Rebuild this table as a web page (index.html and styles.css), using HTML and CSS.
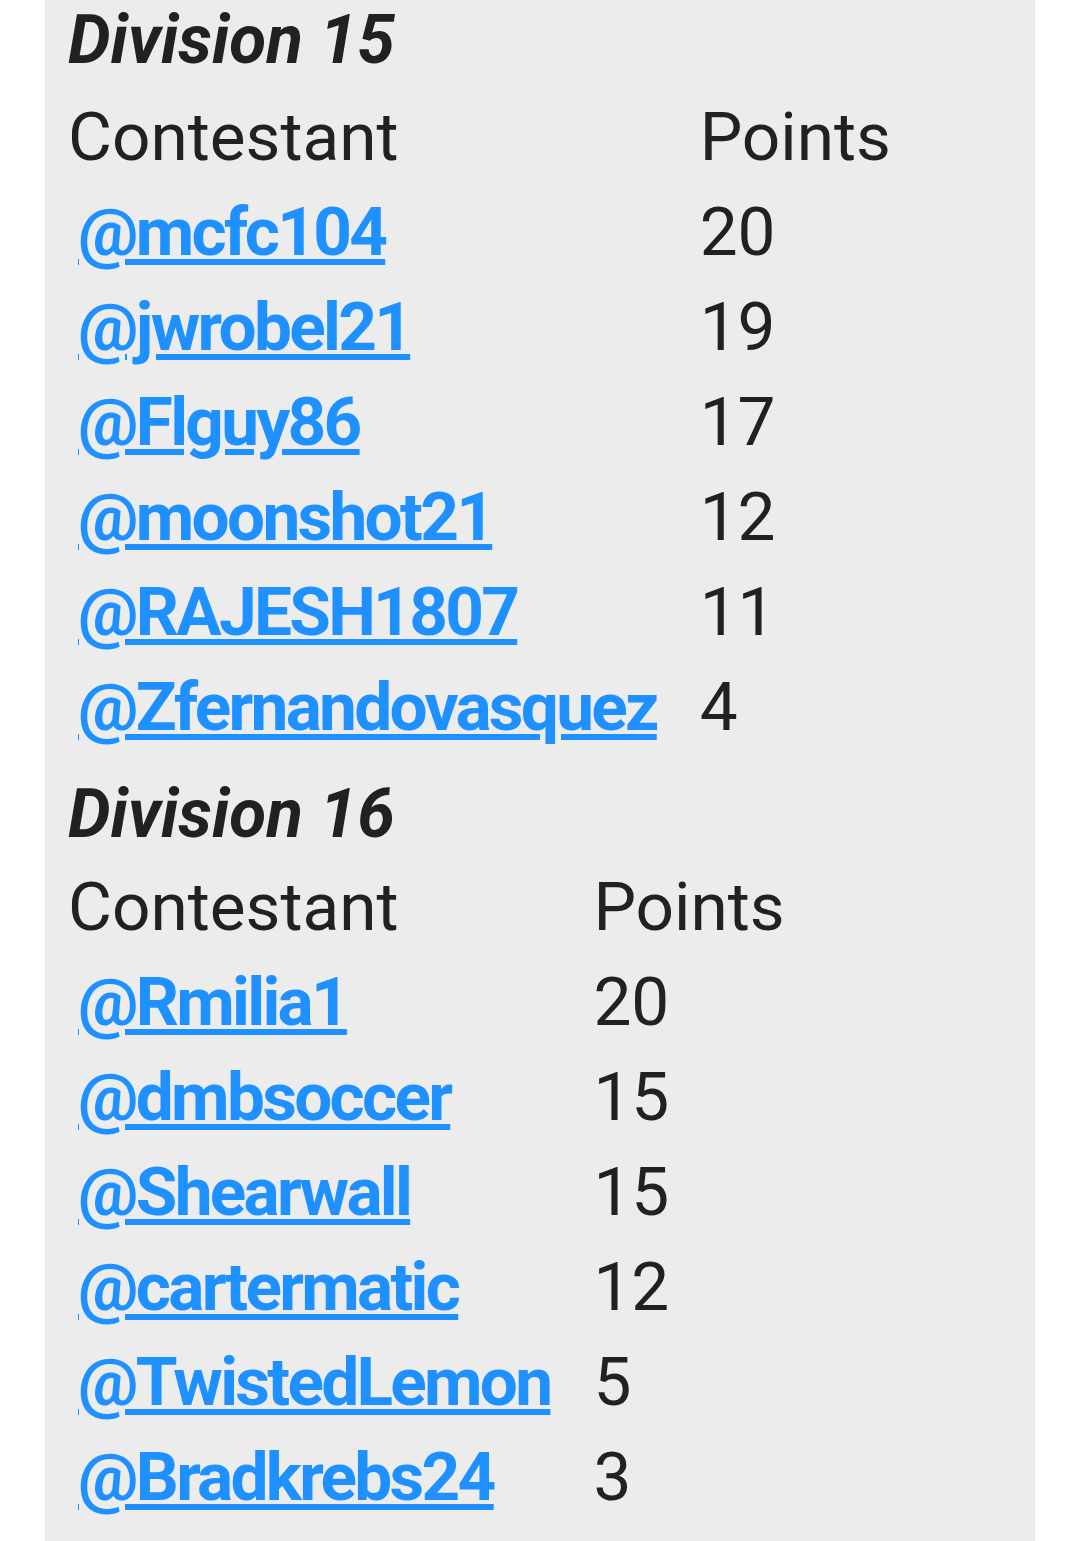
FILE: index.html
```html
<!DOCTYPE html>
<html lang="en">
<head>
<meta charset="utf-8">
<title>Divisions</title>
<link rel="stylesheet" href="styles.css">
</head>
<body>
<main class="panel">
  <h2 class="division">Division 15</h2>
  <table class="standings">
    <tr><td>Contestant</td><td>Points</td></tr>
    <tr><td><a href="#">@mcfc104</a></td><td>20</td></tr>
    <tr><td><a href="#">@jwrobel21</a></td><td>19</td></tr>
    <tr><td><a href="#">@Flguy86</a></td><td>17</td></tr>
    <tr><td><a href="#">@moonshot21</a></td><td>12</td></tr>
    <tr><td><a href="#">@RAJESH1807</a></td><td>11</td></tr>
    <tr><td><a href="#">@Zfernandovasquez</a></td><td>4</td></tr>
  </table>
  <h2 class="division division-next">Division 16</h2>
  <table class="standings">
    <tr><td>Contestant</td><td>Points</td></tr>
    <tr><td><a href="#">@Rmilia1</a></td><td>20</td></tr>
    <tr><td><a href="#">@dmbsoccer</a></td><td>15</td></tr>
    <tr><td><a href="#">@Shearwall</a></td><td>15</td></tr>
    <tr><td><a href="#">@cartermatic</a></td><td>12</td></tr>
    <tr><td><a href="#">@TwistedLemon</a></td><td>5</td></tr>
    <tr><td><a href="#">@Bradkrebs24</a></td><td>3</td></tr>
  </table>
</main>
</body>
</html>
```
FILE: styles.css
```css
html, body {
  margin: 0;
  padding: 0;
  height: 100%;
  background: #ffffff;
}

body {
  font-family: Roboto, "Liberation Sans", sans-serif;
  color: #212121;
}

.panel {
  box-sizing: border-box;
  width: 990px;
  min-height: 100%;
  margin-left: 45px;
  padding: 0 0 0 23px;
  background: #ececec;
  overflow: hidden;
}

.division {
  margin: 0 0 10px;
  font-size: 67.5px;
  line-height: 79px;
  font-weight: 700;
  font-style: italic;
}

.division-next {
  margin-top: 20px;
  margin-bottom: 6px;
}

.standings {
  border-collapse: collapse;
  border-spacing: 0;
  font-size: 67.5px;
}

.standings td {
  padding: 0 43px 0 0;
  line-height: 95px;
  white-space: nowrap;
  vertical-align: baseline;
}

.standings a {
  margin-left: 10px;
  color: #1e90ff;
  font-weight: 700;
  letter-spacing: -2.7px;
  text-decoration: underline;
  text-decoration-thickness: 6px;
  text-underline-offset: 4px;
}
```
